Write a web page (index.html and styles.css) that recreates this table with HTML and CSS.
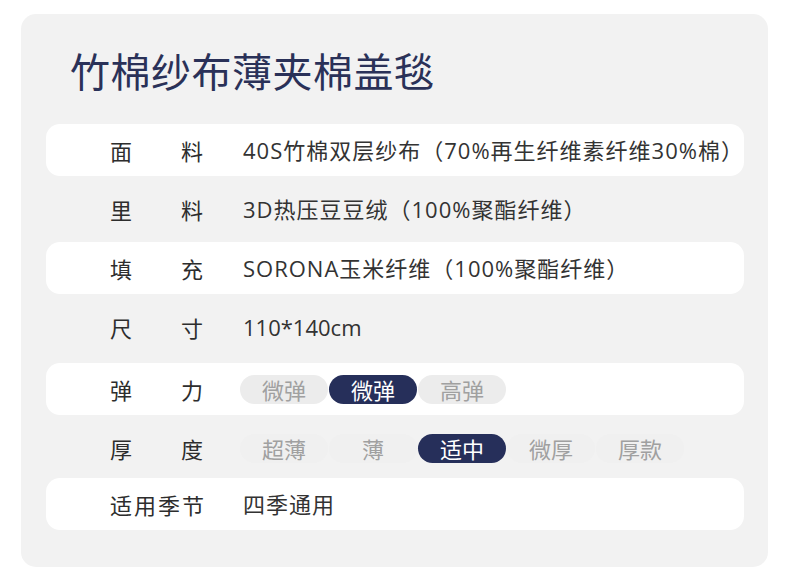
FILE: index.html
```html
<!DOCTYPE html>
<html lang="zh-CN">
<head>
<meta charset="utf-8">
<title>竹棉纱布薄夹棉盖毯</title>
<link rel="stylesheet" href="styles.css">
</head>
<body>
<div class="card">
  <h1 class="title">竹棉纱布薄夹棉盖毯</h1>
  <div class="rows">
    <div class="row row-white">
      <div class="label"><span>面</span><span>料</span></div>
      <div class="value">40S竹棉双层纱布（70%再生纤维素纤维30%棉）</div>
    </div>
    <div class="row">
      <div class="label"><span>里</span><span>料</span></div>
      <div class="value">3D热压豆豆绒（100%聚酯纤维）</div>
    </div>
    <div class="row row-white">
      <div class="label"><span>填</span><span>充</span></div>
      <div class="value">SORONA玉米纤维（100%聚酯纤维）</div>
    </div>
    <div class="row">
      <div class="label"><span>尺</span><span>寸</span></div>
      <div class="value value-num">110*140cm</div>
    </div>
    <div class="row row-white">
      <div class="label"><span>弹</span><span>力</span></div>
      <div class="chips">
        <span class="chip">微弹</span>
        <span class="chip chip-active">微弹</span>
        <span class="chip">高弹</span>
      </div>
    </div>
    <div class="row">
      <div class="label"><span>厚</span><span>度</span></div>
      <div class="chips chips-faint">
        <span class="chip">超薄</span>
        <span class="chip">薄</span>
        <span class="chip chip-active">适中</span>
        <span class="chip">微厚</span>
        <span class="chip">厚款</span>
      </div>
    </div>
    <div class="row row-white">
      <div class="label label-long">适用季节</div>
      <div class="value">四季通用</div>
    </div>
  </div>
</div>
</body>
</html>
```

FILE: styles.css
```css
* { box-sizing: border-box; }

html, body {
  margin: 0;
  padding: 0;
  background: #ffffff;
}

body {
  font-family: "Noto Sans CJK SC", "Noto Sans", sans-serif;
  color: #333333;
}

.card {
  margin: 14px 0 0 21px;
  width: 747px;
  height: 553px;
  background: #f2f2f2;
  border-radius: 15px;
  padding: 36px 24px 0 25px;
}

.title {
  margin: 0 0 34px 24px;
  font-size: 40px;
  line-height: 40px;
  font-weight: 400;
  color: #2a3158;
  letter-spacing: 0.5px;
}

.rows {
  display: flex;
  flex-direction: column;
  gap: 7px;
}

.row {
  height: 52px;
  display: flex;
  align-items: center;
  padding-left: 64px;
  border-radius: 14px;
}

.row:nth-child(5) {
  margin-top: 3px;
}

.row:nth-child(6) {
  margin-bottom: -3px;
}

.row-white {
  background: #ffffff;
}

.label {
  width: 93px;
  display: flex;
  justify-content: space-between;
  font-size: 22px;
  line-height: 1;
  color: #2d2d2d;
  flex: none;
}

.label-long {
  display: block;
  font-size: 22px;
  letter-spacing: 2px;
  white-space: nowrap;
}

.value {
  margin-left: 40px;
  font-family: "Open Sans", "Noto Sans CJK SC", sans-serif;
  font-size: 22px;
  line-height: 1;
  color: #333333;
  white-space: nowrap;
  letter-spacing: 1px;
}

.value-num {
  letter-spacing: 0;
}

.chips {
  margin-left: 37px;
  display: flex;
  gap: 1px;
}

.chip {
  width: 88px;
  height: 29px;
  border-radius: 15px;
  background: #ececec;
  color: #a0a0a0;
  font-size: 22px;
  line-height: 29px;
  text-align: center;
}

.chips-faint .chip {
  background: #f0f0f0;
}

.chip.chip-active {
  background: #262f5a;
  color: #ffffff;
}
```
